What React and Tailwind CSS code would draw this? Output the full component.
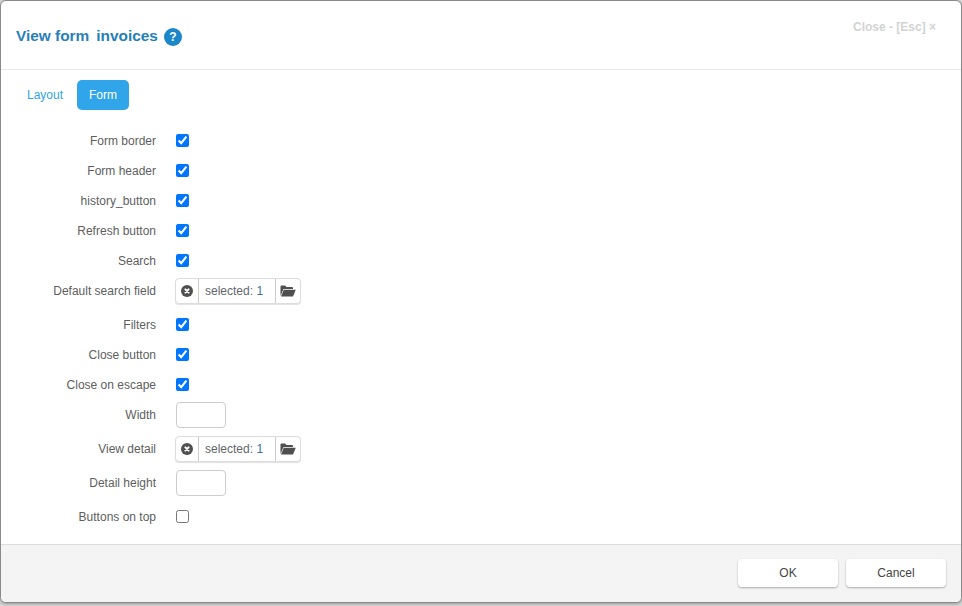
import React from "react";

const font = { fontFamily: '"Liberation Sans", Arial, sans-serif' };

function Label({ children, className = "" }) {
  return <div className={`w-[155px] text-right text-[12px] leading-[17px] text-[#5e5e5e] shrink-0 ${className}`}>{children}</div>;
}

function CheckRow({ label, checked = true }) {
  return (
    <div className="flex items-center h-[30px]">
      <Label className="pt-[2px]">{label}</Label>
      <input type="checkbox" defaultChecked={checked} className="ml-5 m-0 w-[13px] h-[13px]" />
    </div>
  );
}

function Selector({ label, className }) {
  return (
    <div className={`flex items-center ${className}`}>
      <Label>{label}</Label>
      <div className="ml-[19px] flex h-[26px] w-[126px] rounded-[4px] border border-[#dddddd] bg-white shadow-[0_1px_1px_rgba(0,0,0,0.12)]">
        <div className="w-[23px] border-r border-[#cccccc] flex items-center justify-center shrink-0">
          <svg width="12" height="12" viewBox="0 0 12 12">
            <circle cx="6" cy="6" r="6" fill="#4f4f4f" />
            <path d="M4.4 4.4 L7.6 7.6 M7.6 4.4 L4.4 7.6" stroke="#ffffff" strokeWidth="2" strokeLinecap="round" />
          </svg>
        </div>
        <div className="w-[77px] border-r border-[#cccccc] pl-[6px] text-[12px] leading-[24px] text-[#5f666c] shrink-0">
          selected: <span className="text-[#3f6f99]">1</span>
        </div>
        <div className="flex-1 flex items-center justify-center">
          <svg width="16" height="12" viewBox="0 0 16 12">
            <path d="M0.5 11 V1.5 Q0.5 0.5 1.5 0.5 H5 L6.5 2 H12 Q13 2 13 3 V4 H3.5 Z" fill="#4f4f4f" />
            <path d="M3.8 4.8 H15.8 L13 11.5 H1 Z" fill="#4f4f4f" />
          </svg>
        </div>
      </div>
    </div>
  );
}

function NumberRow({ label, className }) {
  return (
    <div className={`flex items-center ${className}`}>
      <Label>{label}</Label>
      <input type="text" className="ml-5 w-[50px] h-[26px] rounded-[4px] border border-[#cccccc] bg-white outline-none" />
    </div>
  );
}

export default function App() {
  return (
    <div className="w-[962px] h-[606px] bg-[#d6d6d6] overflow-hidden" style={font}>
      <div className="w-[962px] h-[603px] bg-white border border-[#8a8a8a] rounded-[6px] flex flex-col overflow-hidden shadow-[0_1px_3px_rgba(0,0,0,0.3)]">
        <div className="h-[69px] shrink-0 border-b border-[#e8e8e8] flex items-start justify-between">
          <div className="flex items-center pl-[15px] pt-[25px]">
            <span className="text-[15.4px] leading-[18px] font-bold text-[#2a80b9]">View form</span>
            <span className="ml-[7px] text-[15.4px] leading-[18px] font-bold text-[#1f80b8]">invoices</span>
            <span className="ml-[6px] mt-[2px] w-[18px] h-[18px] rounded-full bg-[#1b87c9] text-white text-[12px] leading-[18px] font-bold text-center">?</span>
          </div>
          <div className="pt-[19px] pr-[25px] text-[12px] leading-[14px] font-bold text-[#d3d3d3]">Close - [Esc] ×</div>
        </div>

        <div className="flex-1 min-h-0 flex flex-col">
          <div className="flex pt-[10px] pl-[15px] text-[12px]">
            <div className="h-[30px] px-[11px] leading-[30px] text-[#31a3e8]">Layout</div>
            <div className="ml-[3px] h-[30px] w-[52px] text-center leading-[30px] rounded-[5px] bg-[#31a5e9] text-white">Form</div>
          </div>
          <div className="pt-[15px] flex flex-col">
            <CheckRow label="Form border" />
            <CheckRow label="Form header" />
            <CheckRow label="history_button" />
            <CheckRow label="Refresh button" />
            <CheckRow label="Search" />
            <Selector label="Default search field" className="h-[32px]" />
            <div className="h-[2px]" />
            <CheckRow label="Filters" />
            <CheckRow label="Close button" />
            <CheckRow label="Close on escape" />
            <NumberRow label="Width" className="h-[32px]" />
            <Selector label="View detail" className="h-[36px]" />
            <NumberRow label="Detail height" className="h-[32px]" />
            <div className="h-[2px]" />
            <CheckRow label="Buttons on top" checked={false} />
          </div>
        </div>

        <div className="h-[58px] shrink-0 border-t border-[#dddddd] bg-[#f4f4f4] flex justify-end items-start pt-[14px] pr-[15px] gap-2">
          <button className="w-[100px] h-[28px] rounded-[4px] bg-white text-[12px] text-[#444444] shadow-[0_1px_2px_rgba(0,0,0,0.3)]">OK</button>
          <button className="w-[100px] h-[28px] rounded-[4px] bg-white text-[12px] text-[#444444] shadow-[0_1px_2px_rgba(0,0,0,0.3)]">Cancel</button>
        </div>
      </div>
    </div>
  );
}
